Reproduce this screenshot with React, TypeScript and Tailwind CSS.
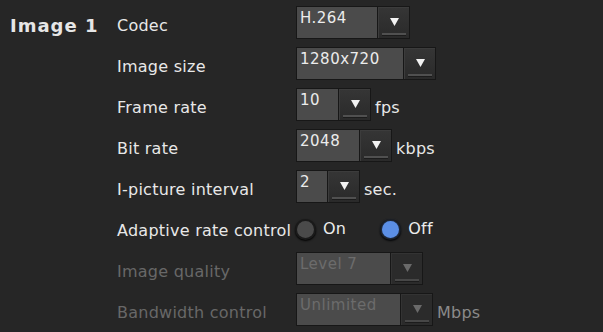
import React from 'react';

type SelectProps = {
  value: string;
  width: number;
  disabled?: boolean;
};

const boxW: Record<number, string> = {
  80: 'w-[80px]',
  106: 'w-[106px]',
  41: 'w-[41px]',
  62: 'w-[62px]',
  30: 'w-[30px]',
  93: 'w-[93px]',
  103: 'w-[103px]',
};

function Select({ value, width, disabled }: SelectProps) {
  return (
    <div className="flex h-[33px] border border-[#171717] bg-[#171717] shrink-0">
      <div
        className={`${boxW[width]} h-full bg-[#4b4b4b] pl-[3px] pt-[2px] text-[15px] leading-[18px] tracking-[0.5px] ${
          disabled ? 'text-[#6c6c6c]' : 'text-[#ececec]'
        }`}
      >
        {value}
      </div>
      <div
        className={`relative w-[31px] h-full ml-px border-t border-l flex justify-center pt-[9px] ${
          disabled
            ? 'bg-[#2b2b2b] border-[#333333]'
            : 'bg-gradient-to-b from-[#353535] to-[#2a2a2a] border-[#3c3c3c]'
        }`}
      >
        <svg width="11" height="10" viewBox="0 0 11 10">
          <polygon points="1,1 10,1 5.5,9" fill={disabled ? '#6a6a6a' : '#f2f2f2'} />
        </svg>
        <div
          className={`absolute left-[3px] right-[3px] bottom-[2px] h-[3px] border-b border-[#1c1c1c] ${
            disabled ? 'bg-[#474747]' : 'bg-[#505050]'
          }`}
        />
      </div>
    </div>
  );
}

function Row({
  label,
  disabled,
  children,
}: {
  label: string;
  disabled?: boolean;
  children: React.ReactNode;
}) {
  return (
    <div className="flex items-center h-[33px] mb-[8px]">
      <div
        className={`w-[179px] pt-[6px] text-[16px] tracking-[0.25px] ${disabled ? 'text-[#686868]' : 'text-[#e8e8e8]'}`}
      >
        {label}
      </div>
      {children}
    </div>
  );
}

function Unit({ children, disabled }: { children: React.ReactNode; disabled?: boolean }) {
  return (
    <span
      className={`ml-[4px] pt-[6px] text-[16px] tracking-[0.25px] ${disabled ? 'text-[#8a8a8a]' : 'text-[#e8e8e8]'}`}
    >
      {children}
    </span>
  );
}

function Radio({ checked, label }: { checked?: boolean; label: string }) {
  return (
    <div className="flex items-center">
      <div className="w-[21px] h-[21px] rounded-full bg-[#1a1a1a] flex items-center justify-center shadow-[0_1px_2px_#000]">
        <div
          className={`w-[17px] h-[17px] rounded-full ${
            checked ? 'bg-[#5b8fe6] shadow-[0_0_3px_#2a4a80]' : 'bg-[#4a4a4a]'
          }`}
        />
      </div>
      <span className="ml-[7px] text-[16px] tracking-[0.25px] text-[#ececec]">{label}</span>
    </div>
  );
}

export default function App() {
  return (
    <div
      className="w-[603px] h-[332px] bg-[#262626] flex overflow-hidden"
      style={{ fontFamily: '"DejaVu Sans", Verdana, sans-serif' }}
    >
      <div className="w-[117px] pl-[10px] pt-[12px] text-[18px] font-bold tracking-[1px] text-[#e6e6e6]">
        Image 1
      </div>
      <div className="pt-[6px]">
        <Row label="Codec">
          <Select value="H.264" width={80} />
        </Row>
        <Row label="Image size">
          <Select value="1280x720" width={106} />
        </Row>
        <Row label="Frame rate">
          <Select value="10" width={41} />
          <Unit>fps</Unit>
        </Row>
        <Row label="Bit rate">
          <Select value="2048" width={62} />
          <Unit>kbps</Unit>
        </Row>
        <Row label="I-picture interval">
          <Select value="2" width={30} />
          <Unit>sec.</Unit>
        </Row>
        <Row label="Adaptive rate control">
          <div className="flex items-center -ml-[1px] pt-[3px]">
            <Radio label="On" />
            <div className="w-[34px]" />
            <Radio checked label="Off" />
          </div>
        </Row>
        <Row label="Image quality" disabled>
          <Select value="Level 7" width={93} disabled />
        </Row>
        <Row label="Bandwidth control" disabled>
          <Select value="Unlimited" width={103} disabled />
          <Unit disabled>Mbps</Unit>
        </Row>
      </div>
    </div>
  );
}
